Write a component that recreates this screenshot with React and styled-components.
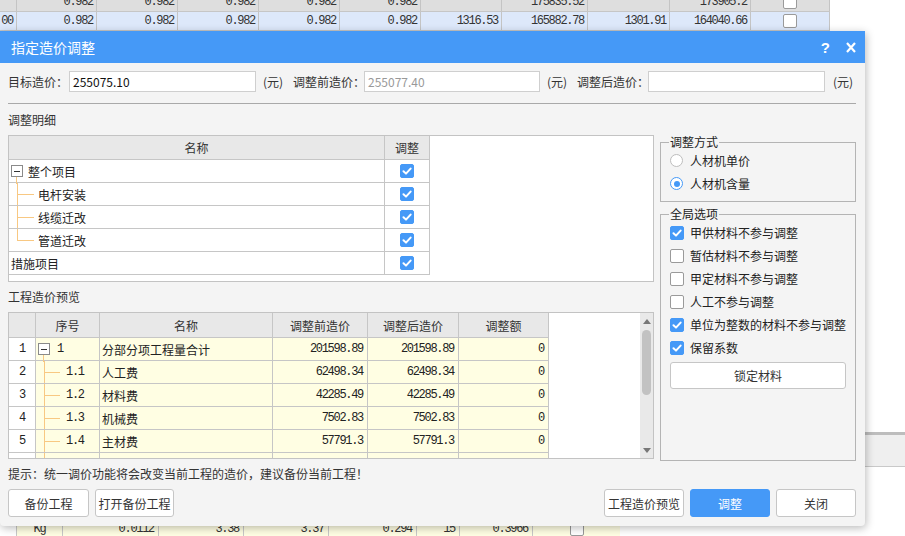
import React from 'react';
import styled, { createGlobalStyle } from 'styled-components';

const CJK = `"Noto Sans CJK SC", "Noto Sans", sans-serif`;
const MONO = `"Liberation Mono", "DejaVu Sans Mono", "Noto Sans CJK SC", monospace`;
const BLUE = '#4599f7';
const TREE = '#f8c882';

const GlobalStyle = createGlobalStyle`
  html, body { margin: 0; padding: 0; background: #fff; }
  body { font-family: ${CJK}; font-size: 12px; color: #222; }
  * { box-sizing: border-box; }
`;

const Page = styled.div`
  position: relative;
  width: 905px;
  height: 536px;
  overflow: hidden;
  background: #fff;
`;

/* ---------- background sheet ---------- */
const BgTop = styled.div`
  margin-top: -7px;
`;
const BgRow = styled.div`
  display: grid;
  grid-template-columns: 17px 80px 81px 81px 81px 81px 81px 86px 82px 81px 79px;
  width: 830px;
  height: 19px;
  background: ${p => (p.$tone === 'blue' ? '#dde8fa' : '#dedede')};
  border-bottom: 1px solid #c6c6c6;
`;
const BgCell = styled.div`
  border-right: 1px solid #c4c4c4;
  text-align: right;
  padding-right: 3px;
  font-family: ${MONO};
  font-size: 12px;
  letter-spacing: -1.3px;
  line-height: 18px;
  color: #333;
  white-space: nowrap;
  overflow: hidden;
`;
const BgCheckCell = styled.div`
  border-right: 1px solid #c4c4c4;
  display: flex;
  align-items: center;
  justify-content: center;
`;
const BgCheck = styled.span`
  width: 14px;
  height: 14px;
  border: 1px solid #9a9a9a;
  border-radius: 2px;
  background: #fff;
`;
const BgMiddle = styled.div`
  height: 488px;
  display: flex;
  flex-direction: column;
`;
const BgSpacer = styled.div`
  height: 401px;
`;
const BgBar = styled.div`
  height: 3px;
  background: #bdbdbd;
`;
const BgPanel = styled.div`
  height: 32px;
  background: #efefef;
  border-bottom: 1px solid #c9c9c9;
`;
const BgBottomRow = styled.div`
  display: grid;
  grid-template-columns: 16px 46px 96px 85px 85px 88px 43px 73px 88px;
  width: 620px;
  height: 20px;
`;
const BgBlank = styled.div``;
const BgYCell = styled.div`
  background: #fffee3;
  border-left: 1px solid #c8c8c8;
  text-align: ${p => p.$align || 'right'};
  padding: 0 4px;
  font-family: ${MONO};
  font-size: 12px;
  letter-spacing: -1.3px;
  line-height: 20px;
  color: #333;
  display: ${p => (p.$flex ? 'flex' : 'block')};
  align-items: center;
  justify-content: center;
`;

/* ---------- dialog ---------- */
const Dialog = styled.div`
  position: absolute;
  left: 0;
  top: 31px;
  width: 865px;
  height: 495px;
  background: #f4f4f4;
  border-radius: 0 0 4px 4px;
  box-shadow: 1px 2px 8px rgba(0, 0, 0, 0.28);
  display: flex;
  flex-direction: column;
`;
const TitleBar = styled.div`
  height: 32px;
  flex: none;
  background: ${BLUE};
  color: #fff;
  display: flex;
  align-items: center;
  justify-content: space-between;
  padding: 0 9px 0 11px;
  font-size: 14px;
`;
const TitleTools = styled.div`
  display: flex;
  align-items: center;
  gap: 16px;
`;
const Help = styled.span`
  font-family: "Liberation Sans", sans-serif;
  font-weight: bold;
  font-size: 15px;
  line-height: 1;
`;
const Body = styled.div`
  flex: 1;
  display: flex;
  flex-direction: column;
  padding: 8px 9px 9px 8px;
`;
const TopRow = styled.div`
  display: flex;
  align-items: center;
  height: 21px;
`;
const FieldLabel = styled.span`
  width: ${p => p.$w}px;
  flex: none;
  color: #333;
  white-space: nowrap;
`;
const Input = styled.div`
  width: ${p => p.$w}px;
  height: 21px;
  flex: none;
  background: #fff;
  border: 1px solid #cfcfcf;
  padding-left: 3px;
  font-size: 12px;
  line-height: 19px;
  color: ${p => (p.$muted ? '#999' : '#111')};
`;
const Unit = styled.span`
  width: ${p => p.$w || 37}px;
  flex: none;
  padding-left: ${p => p.$pl || 7}px;
  color: #333;
  white-space: nowrap;
`;
const Separator = styled.div`
  margin-top: 11px;
  height: 1px;
  background: #a9a9a9;
`;
const Main = styled.div`
  display: flex;
  gap: 6px;
  align-items: flex-start;
`;
const LeftCol = styled.div`
  width: 646px;
  display: flex;
  flex-direction: column;
`;
const SectionLabel = styled.div`
  margin-top: ${p => p.$mt}px;
  line-height: 16px;
  height: 16px;
  color: #333;
`;
const TreeBox = styled.div`
  margin-top: 7px;
  height: 147px;
  background: #fff;
  border: 1px solid #c3c3c3;
  overflow: hidden;
`;
const TreeGrid = styled.div`
  display: grid;
  grid-template-columns: 376px 45px;
  width: 421px;
`;
const HeadCell = styled.div`
  height: ${p => p.$h}px;
  background: #e8e8e8;
  border-right: 1px solid #c6c6c6;
  border-bottom: 1px solid #c6c6c6;
  display: flex;
  align-items: center;
  justify-content: center;
  color: #333;
  white-space: nowrap;
`;
const Cell = styled.div`
  height: 23px;
  background: ${p => (p.$yellow ? '#fffee3' : '#fff')};
  border-right: 1px solid #c6c6c6;
  border-bottom: 1px solid #c6c6c6;
  display: flex;
  align-items: center;
  justify-content: ${p => p.$justify || 'flex-start'};
  padding: 0 ${p => p.$pr || 0}px 0 ${p => p.$pl || 0}px;
  white-space: nowrap;
  overflow: ${p => (p.$visible ? 'visible' : 'hidden')};
  color: #222;
`;
const Mono = styled.span`
  font-family: ${MONO};
  font-size: 12px;
  letter-spacing: -1.3px;
`;
const ExpandBox = styled.span`
  position: relative;
  flex: none;
  width: 12px;
  height: 12px;
  border: 1px solid #8a8a8a;
  background: #fff;
  display: inline-flex;
  align-items: center;
  justify-content: center;
  margin-right: ${p => p.$mr}px;
  &::before {
    content: '';
    width: 6px;
    height: 1px;
    background: #333;
  }
  &::after {
    content: '';
    position: absolute;
    left: 4px;
    top: calc(100% + 1px);
    height: 7px;
    border-left: 1px solid ${TREE};
  }
`;
const Guide = styled.span`
  position: relative;
  align-self: stretch;
  flex: none;
  width: ${p => p.$w}px;
  margin-left: ${p => p.$ml}px;
  margin-right: ${p => p.$mr}px;
  &::before {
    content: '';
    position: absolute;
    left: 0;
    top: 0;
    bottom: ${p => (p.$last ? '50%' : '0')};
    border-left: 1px solid ${TREE};
  }
  &::after {
    content: '';
    position: absolute;
    left: 0;
    right: 0;
    top: 50%;
    border-top: 1px solid ${TREE};
  }
`;
const CheckBox = styled.span`
  width: 14px;
  height: 14px;
  flex: none;
  border-radius: 2px;
  display: inline-flex;
  align-items: center;
  justify-content: center;
  background: ${p => (p.$checked ? BLUE : '#fff')};
  border: 1px solid ${p => (p.$checked ? BLUE : '#9a9a9a')};
`;
const Radio = styled.span`
  width: 13px;
  height: 13px;
  flex: none;
  border-radius: 50%;
  background: #fff;
  border: 1px solid ${p => (p.$checked ? BLUE : '#bdbdbd')};
  display: inline-flex;
  align-items: center;
  justify-content: center;
  &::after {
    content: '';
    width: 6px;
    height: 6px;
    border-radius: 50%;
    background: ${p => (p.$checked ? BLUE : 'transparent')};
  }
`;
const PreviewBox = styled.div`
  margin-top: 7px;
  height: 147px;
  background: #fff;
  border: 1px solid #c3c3c3;
  display: flex;
  overflow: hidden;
`;
const PreviewArea = styled.div`
  flex: 1;
  overflow: hidden;
`;
const PreviewGrid = styled.div`
  display: grid;
  grid-template-columns: 27px 64px 173px 95px 91px 90px;
  width: 540px;
`;
const ScrollBar = styled.div`
  width: 13px;
  flex: none;
  background: #e9e9e9;
  display: flex;
  flex-direction: column;
  align-items: center;
  padding: 6px 0 5px;
`;
const ScrollThumb = styled.div`
  margin-top: 6px;
  width: 9px;
  height: 65px;
  border-radius: 5px;
  background: #c2c2c2;
`;
const ScrollFill = styled.div`
  flex: 1;
`;
const RightCol = styled.div`
  width: 196px;
  display: flex;
  flex-direction: column;
  margin-top: 31px;
`;
const GroupBox = styled.fieldset`
  margin: ${p => p.$mt || 0}px 0 0;
  padding: 0 8px ${p => p.$pb}px 9px;
  border: 1px solid #b4b4b4;
  min-width: 0;
`;
const GroupLegend = styled.legend`
  padding: 0 1px;
  margin-left: -1px;
  font-size: 12px;
  line-height: 14px;
  color: #222;
`;
const OptionRow = styled.div`
  height: 23px;
  display: flex;
  align-items: center;
  gap: ${p => p.$gap || 6}px;
  color: #222;
  white-space: nowrap;
`;
const Hint = styled.div`
  margin-top: 5px;
  line-height: 16px;
  height: 16px;
  color: #333;
`;
const ButtonRow = styled.div`
  margin-top: 7px;
  display: flex;
  gap: 6px;
`;
const Spacer = styled.div`
  flex: 1;
`;
const Button = styled.button`
  width: ${p => p.$w}px;
  height: ${p => p.$h || 28}px;
  margin-top: ${p => p.$mt || 0}px;
  flex: none;
  padding: 0;
  border-radius: 3px;
  border: 1px solid ${p => (p.$primary ? BLUE : '#c6c6c6')};
  background: ${p => (p.$primary ? BLUE : '#fff')};
  color: ${p => (p.$primary ? '#fff' : '#333')};
  font-family: ${CJK};
  font-size: 12px;
`;

const Check = () => (
  <svg width="10" height="10" viewBox="0 0 10 10">
    <polyline points="1.5,5.2 4,7.6 8.6,2.6" fill="none" stroke="#fff" strokeWidth="2" strokeLinecap="round" strokeLinejoin="round" />
  </svg>
);
const Box = ({ checked }) => <CheckBox $checked={checked}>{checked && <Check />}</CheckBox>;

const CloseIcon = () => (
  <svg width="10" height="11" viewBox="0 0 10 11">
    <path d="M1 1 L9 10 M9 1 L1 10" stroke="#fff" strokeWidth="2.2" />
  </svg>
);
const Tri = ({ down }) => (
  <svg width="8" height="5" viewBox="0 0 8 5">
    <path d={down ? 'M0 0 H8 L4 5 Z' : 'M0 5 H8 L4 0 Z'} fill="#777" />
  </svg>
);

const bgRow1 = ['', '0.982', '0.982', '0.982', '0.982', '0.982', '', '175835.52', '', '173905.2'];
const bgRow2 = ['00', '0.982', '0.982', '0.982', '0.982', '0.982', '1316.53', '165882.78', '1301.91', '164040.66'];

const treeRows = [
  { name: '整个项目', root: true },
  { name: '电杆安装', child: true },
  { name: '线缆迁改', child: true },
  { name: '管道迁改', child: true, last: true },
  { name: '措施项目' },
];

const previewRows = [
  { n: '1', seq: '1', name: '分部分项工程量合计', a: '201598.89', b: '201598.89', c: '0', root: true },
  { n: '2', seq: '1.1', name: '人工费', a: '62498.34', b: '62498.34', c: '0' },
  { n: '3', seq: '1.2', name: '材料费', a: '42285.49', b: '42285.49', c: '0' },
  { n: '4', seq: '1.3', name: '机械费', a: '7502.83', b: '7502.83', c: '0' },
  { n: '5', seq: '1.4', name: '主材费', a: '57791.3', b: '57791.3', c: '0' },
  { n: '', seq: '', name: '设备费', a: '', b: '', c: '' },
];

const options = [
  ['甲供材料不参与调整', true],
  ['暂估材料不参与调整', false],
  ['甲定材料不参与调整', false],
  ['人工不参与调整', false],
  ['单位为整数的材料不参与调整', true],
  ['保留系数', true],
];

export default function App() {
  return (
    <Page>
      <GlobalStyle />
      <BgTop>
        <BgRow>
          {bgRow1.map((v, i) => (
            <BgCell key={i}>{v}</BgCell>
          ))}
          <BgCheckCell>
            <BgCheck />
          </BgCheckCell>
        </BgRow>
        <BgRow $tone="blue">
          {bgRow2.map((v, i) => (
            <BgCell key={i}>{v}</BgCell>
          ))}
          <BgCheckCell>
            <BgCheck />
          </BgCheckCell>
        </BgRow>
      </BgTop>
      <BgMiddle>
        <BgSpacer />
        <BgBar />
        <BgPanel />
      </BgMiddle>
      <BgBottomRow>
        <BgBlank />
        <BgYCell $align="center">Kg</BgYCell>
        <BgYCell>0.0112</BgYCell>
        <BgYCell>3.38</BgYCell>
        <BgYCell>3.37</BgYCell>
        <BgYCell>0.294</BgYCell>
        <BgYCell>15</BgYCell>
        <BgYCell>0.3966</BgYCell>
        <BgYCell $flex>
          <BgCheck />
        </BgYCell>
      </BgBottomRow>

      <Dialog>
        <TitleBar>
          <span>指定造价调整</span>
          <TitleTools>
            <Help>?</Help>
            <CloseIcon />
          </TitleTools>
        </TitleBar>
        <Body>
          <TopRow>
            <FieldLabel $w={61}>目标造价：</FieldLabel>
            <Input $w={187}>255075.10</Input>
            <Unit>(元)</Unit>
            <FieldLabel $w={71}>调整前造价：</FieldLabel>
            <Input $w={176} $muted>255077.40</Input>
            <Unit>(元)</Unit>
            <FieldLabel $w={71}>调整后造价：</FieldLabel>
            <Input $w={177} />
            <Unit $pl={8} $w={30}>(元)</Unit>
          </TopRow>
          <Separator />
          <Main>
            <LeftCol>
              <SectionLabel $mt={8}>调整明细</SectionLabel>
              <TreeBox>
                <TreeGrid>
                  <HeadCell $h={24}>名称</HeadCell>
                  <HeadCell $h={24}>调整</HeadCell>
                  {treeRows.map(r => (
                    <React.Fragment key={r.name}>
                      <Cell $pl={r.child ? 0 : 2} $visible={r.root}>
                        {r.root && <ExpandBox $mr={5} />}
                        {r.child && <Guide $ml={8} $w={17} $mr={4} $last={r.last} />}
                        {r.name}
                      </Cell>
                      <Cell $justify="center">
                        <Box checked />
                      </Cell>
                    </React.Fragment>
                  ))}
                </TreeGrid>
              </TreeBox>
              <SectionLabel $mt={7}>工程造价预览</SectionLabel>
              <PreviewBox>
                <PreviewArea>
                  <PreviewGrid>
                    <HeadCell $h={25} />
                    <HeadCell $h={25}>序号</HeadCell>
                    <HeadCell $h={25}>名称</HeadCell>
                    <HeadCell $h={25}>调整前造价</HeadCell>
                    <HeadCell $h={25}>调整后造价</HeadCell>
                    <HeadCell $h={25}>调整额</HeadCell>
                    {previewRows.map((r, i) => (
                      <React.Fragment key={i}>
                        <Cell $justify="center">
                          <Mono>{r.n}</Mono>
                        </Cell>
                        <Cell $yellow $pl={r.root ? 2 : 0} $visible={r.root}>
                          {r.root ? <ExpandBox $mr={7} /> : <Guide $ml={8} $w={16} $mr={6} />}
                          <Mono>{r.seq}</Mono>
                        </Cell>
                        <Cell $yellow $pl={2}>{r.name}</Cell>
                        <Cell $yellow $justify="flex-end" $pr={4}>
                          <Mono>{r.a}</Mono>
                        </Cell>
                        <Cell $yellow $justify="flex-end" $pr={4}>
                          <Mono>{r.b}</Mono>
                        </Cell>
                        <Cell $yellow $justify="flex-end" $pr={4}>
                          <Mono>{r.c}</Mono>
                        </Cell>
                      </React.Fragment>
                    ))}
                  </PreviewGrid>
                </PreviewArea>
                <ScrollBar>
                  <Tri />
                  <ScrollThumb />
                  <ScrollFill />
                  <Tri down />
                </ScrollBar>
              </PreviewBox>
            </LeftCol>
            <RightCol>
              <GroupBox $pb={6}>
                <GroupLegend>调整方式</GroupLegend>
                <OptionRow $gap={7}>
                  <Radio />
                  人材机单价
                </OptionRow>
                <OptionRow $gap={7}>
                  <Radio $checked />
                  人材机含量
                </OptionRow>
              </GroupBox>
              <GroupBox $mt={5} $pb={71}>
                <GroupLegend>全局选项</GroupLegend>
                {options.map(([label, on]) => (
                  <OptionRow key={label}>
                    <Box checked={on} />
                    {label}
                  </OptionRow>
                ))}
                <Button $w={176} $h={27} $mt={3}>锁定材料</Button>
              </GroupBox>
            </RightCol>
          </Main>
          <Hint>提示：统一调价功能将会改变当前工程的造价，建议备份当前工程！</Hint>
          <ButtonRow>
            <Button $w={81}>备份工程</Button>
            <Button $w={79}>打开备份工程</Button>
            <Spacer />
            <Button $w={80}>工程造价预览</Button>
            <Button $w={80} $primary>调整</Button>
            <Button $w={80}>关闭</Button>
          </ButtonRow>
        </Body>
      </Dialog>
    </Page>
  );
}
